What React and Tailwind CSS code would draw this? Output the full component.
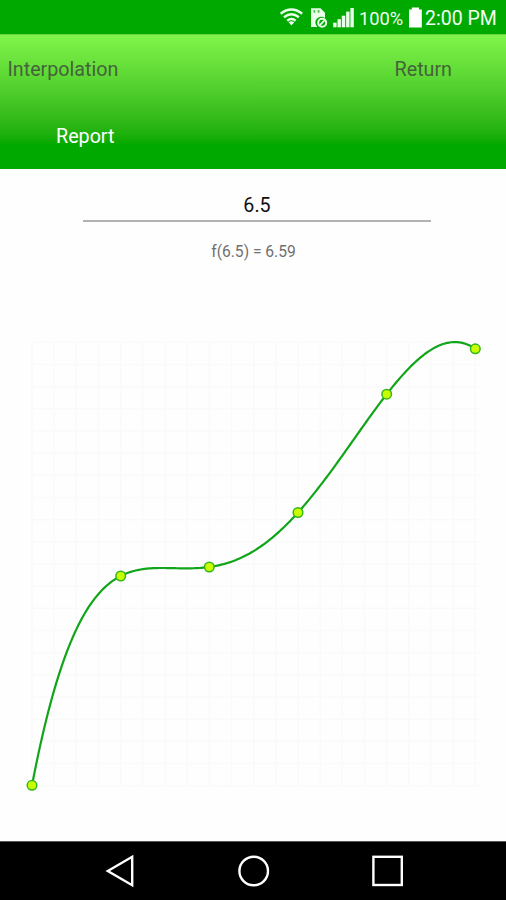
const POINTS = [
  [32, 785.3],
  [120.7, 576],
  [209.3, 567],
  [298, 512.5],
  [386.7, 394.2],
  [475.3, 348.8],
];

const GRID = { left: 32, top: 342.3, size: 443.4, cells: 20 };

// Lagrange polynomial through all the nodes
function interpolate(x) {
  return POINTS.reduce((sum, [xi, yi], i) => {
    let term = yi;
    POINTS.forEach(([xj], j) => {
      if (i !== j) term *= (x - xj) / (xi - xj);
    });
    return sum + term;
  }, 0);
}

function curvePath() {
  const first = POINTS[0][0];
  const last = POINTS[POINTS.length - 1][0];
  const steps = 220;
  const coords = [];
  for (let i = 0; i <= steps; i++) {
    const x = first + ((last - first) * i) / steps;
    coords.push(`${x.toFixed(2)} ${interpolate(x).toFixed(2)}`);
  }
  return `M${coords.join("L")}`;
}

function StatusBar() {
  return (
    <div className="h-[34px] bg-[#00a900] text-[#f2fff2] flex items-center justify-end pr-[9px]">
      {/* Wifi, SIM card, signal */}
      <svg className="w-[80px] h-[34px] shrink-0" viewBox="276 0 80 34" fill="none">
        <g stroke="#e9ffe9" strokeWidth="2.4">
          <path d="M280.6 13.7Q291.4 5.3 302.2 13.7" />
          <path d="M283.9 17.3Q291.4 11.3 298.9 17.3" />
          <path d="M287.2 20.7Q291.4 17.3 295.6 20.7" />
        </g>
        <path d="M288.6 22.2Q291.4 20.4 294.2 22.2L291.4 25.4Z" fill="#e9ffe9" />
        <path d="M311 8.2H320.5L325 12.7V18A5.6 5.6 0 0 0 317.5 27H311Z" fill="#e9ffe9" />
        <path d="M314.4 10V12.8M318.6 10V12.8" stroke="#4cc34c" strokeWidth="1.8" />
        <circle cx="322.2" cy="22.7" r="4" stroke="#e9ffe9" strokeWidth="2" />
        <path d="M319.8 25.1L324.8 20.1" stroke="#e9ffe9" strokeWidth="1.8" />
        <g fill="#e9ffe9">
          <rect x="333.2" y="22.7" width="3.4" height="4.6" />
          <rect x="337.5" y="19.2" width="3.4" height="8.1" />
          <rect x="341.8" y="15.7" width="3.4" height="11.6" />
          <rect x="346.1" y="11.6" width="3.4" height="15.7" />
          <rect x="350.4" y="8" width="3.4" height="19.3" />
        </g>
      </svg>
      <span className="w-[49px] pl-[3px] pt-[3px] text-[18.3px] leading-[24px] whitespace-nowrap">100%</span>
      <svg className="w-[20px] h-[34px] shrink-0" viewBox="405 0 20 34">
        <path d="M411.8 7.5H419V9.5H421.8V27.5H409V9.5H411.8Z" fill="#fff" />
      </svg>
      <span className="w-[72px] pt-[3px] text-[19.5px] leading-[24px] whitespace-nowrap">2:00 PM</span>
    </div>
  );
}

function Header() {
  return (
    <div className="h-[135px] border-t border-[#69d443] bg-linear-to-b from-[#80f54a] to-[#00a900] to-82% text-[19.7px] leading-[24px]">
      <div className="flex justify-between pt-[23px] pl-[7.5px] pr-[54px] text-[#45633b]">
        <span>Interpolation</span>
        <span>Return</span>
      </div>
      <div className="pt-[43px] pl-[56px] text-white">
        <span>Report</span>
      </div>
    </div>
  );
}

function Chart() {
  const step = GRID.size / GRID.cells;
  const right = GRID.left + GRID.size;
  const bottom = GRID.top + GRID.size;
  const lines = Array.from({ length: GRID.cells + 1 }, (_, i) => i * step);

  return (
    <svg className="w-[506px] h-[500px]" viewBox="0 310 506 500" fill="none">
      <g stroke="#fafafa" strokeWidth="1.5">
        {lines.map((d) => (
          <path
            key={d}
            d={`M${GRID.left + d} ${GRID.top}V${bottom}M${GRID.left} ${GRID.top + d}H${right + 4}`}
          />
        ))}
      </g>
      <path d={curvePath()} stroke="#10a51a" strokeWidth="2.2" />
      {POINTS.map(([x, y]) => (
        <circle key={x} cx={x} cy={y} r="4.8" fill="#c8ff00" stroke="#35b51c" strokeWidth="1.5" />
      ))}
    </svg>
  );
}

function NavBar() {
  return (
    <div className="h-[59px] bg-black border-t border-[#555]">
      <svg className="w-[506px] h-[58px]" viewBox="0 842 506 58" fill="none" stroke="#fff" strokeWidth="2.4">
        <path d="M107.8 871L132.2 856.8V885.2Z" />
        <circle cx="253.7" cy="871" r="14.3" />
        <rect x="373.4" y="856.8" width="28.4" height="28.2" />
      </svg>
    </div>
  );
}

function App() {
  return (
    <div className="w-[506px] h-[900px] bg-[#fefefe] flex flex-col overflow-hidden font-[Roboto,sans-serif]">
      <StatusBar />
      <Header />

      <div className="flex-1 min-h-0 flex flex-col items-center">
        {/* Value and result */}
        <div className="mt-[24px] ml-[8px] w-[348px] h-[29px] border-b-2 border-[#b2b2b2] text-center text-[19.7px] leading-[26px] text-[#111]">
          6.5
        </div>
        <div className="mt-[18px] ml-[1px] h-[24px] text-[15.6px] leading-[24px] text-[#707070]">
          f(6.5) = 6.59
        </div>
        <div className="mt-[46px]">
          <Chart />
        </div>
      </div>

      <NavBar />
    </div>
  );
}

export default App;
